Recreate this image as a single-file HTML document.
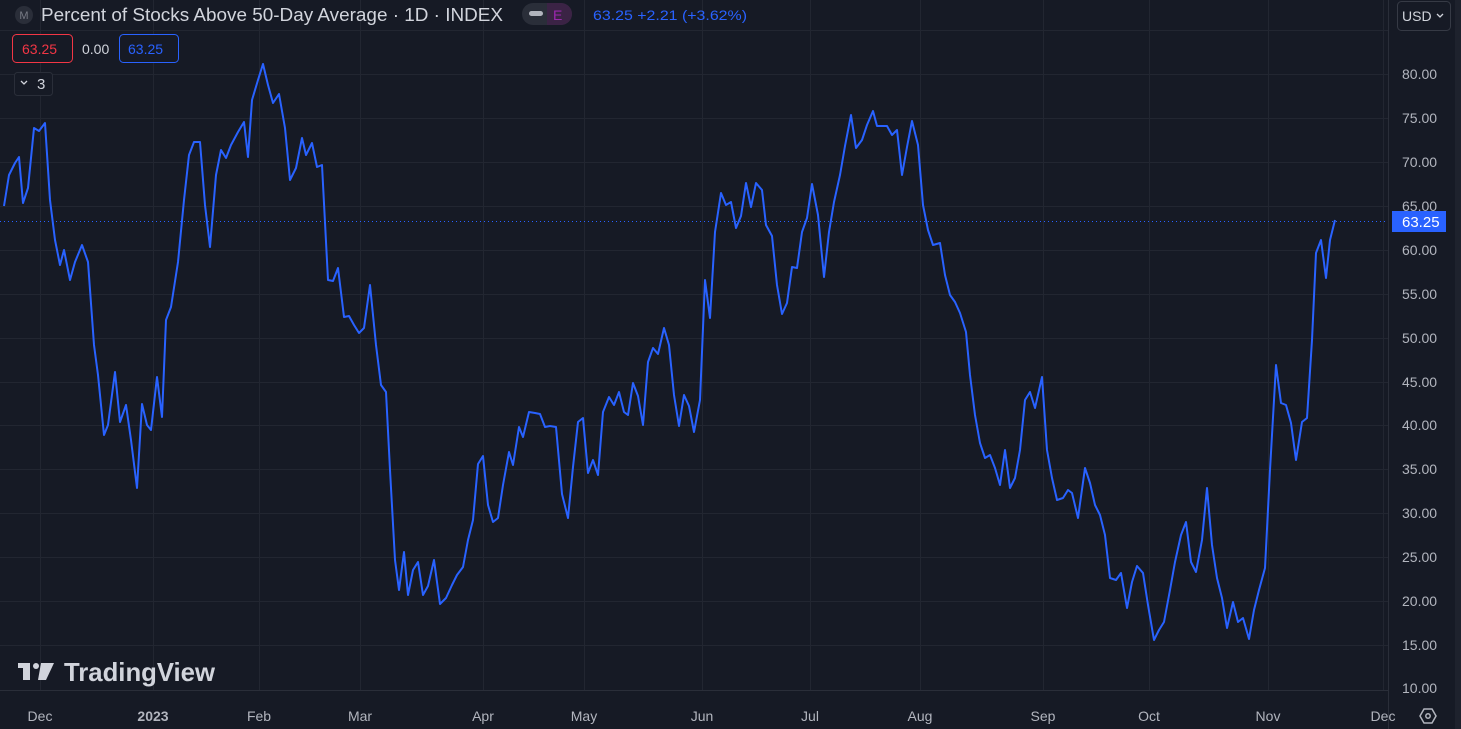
<!DOCTYPE html>
<html><head><meta charset="utf-8"><style>
html,body{margin:0;padding:0;background:#161a25;width:1461px;height:729px;overflow:hidden;font-family:"Liberation Sans",sans-serif}
</style></head><body>
<svg width="1461" height="729" style="position:absolute;left:0;top:0">
<rect width="1461" height="729" fill="#161a25"/>
<g stroke="#222631" stroke-width="1">
<line x1="0" y1="74.5" x2="1388" y2="74.5"/><line x1="0" y1="118.5" x2="1388" y2="118.5"/><line x1="0" y1="162.5" x2="1388" y2="162.5"/><line x1="0" y1="206.5" x2="1388" y2="206.5"/><line x1="0" y1="250.5" x2="1388" y2="250.5"/><line x1="0" y1="294.5" x2="1388" y2="294.5"/><line x1="0" y1="338.5" x2="1388" y2="338.5"/><line x1="0" y1="382.5" x2="1388" y2="382.5"/><line x1="0" y1="425.5" x2="1388" y2="425.5"/><line x1="0" y1="469.5" x2="1388" y2="469.5"/><line x1="0" y1="513.5" x2="1388" y2="513.5"/><line x1="0" y1="557.5" x2="1388" y2="557.5"/><line x1="0" y1="601.5" x2="1388" y2="601.5"/><line x1="0" y1="645.5" x2="1388" y2="645.5"/><line x1="0" y1="30.5" x2="1388" y2="30.5"/>
<line x1="40.5" y1="0" x2="40.5" y2="690"/><line x1="153.5" y1="0" x2="153.5" y2="690"/><line x1="259.5" y1="0" x2="259.5" y2="690"/><line x1="360.5" y1="0" x2="360.5" y2="690"/><line x1="483.5" y1="0" x2="483.5" y2="690"/><line x1="584.5" y1="0" x2="584.5" y2="690"/><line x1="702.5" y1="0" x2="702.5" y2="690"/><line x1="810.5" y1="0" x2="810.5" y2="690"/><line x1="920.5" y1="0" x2="920.5" y2="690"/><line x1="1043.5" y1="0" x2="1043.5" y2="690"/><line x1="1149.5" y1="0" x2="1149.5" y2="690"/><line x1="1268.5" y1="0" x2="1268.5" y2="690"/><line x1="1383.5" y1="0" x2="1383.5" y2="690"/>
</g>
<line x1="0" y1="690.5" x2="1388" y2="690.5" stroke="#2a2e39"/>
<line x1="1388.5" y1="0" x2="1388.5" y2="729" stroke="#2a2e39"/>
<rect x="1455" y="0" width="6" height="729" fill="#1e222d"/>
<line x1="0" y1="221.5" x2="1388" y2="221.5" stroke="#2962ff" stroke-dasharray="1,3"/>
<polyline fill="none" stroke="#2962ff" stroke-width="2" stroke-linejoin="round" points="4,206 9,175 15,163 19,157 23,203 28,188 34,128 39,131 45,123 50,200 55,240 60,265 64,250 70,280 75,262 82,245 88,262 94,345 98,375 104,435 108,425 115,372 120,422 126,405 131,440 137,488 142,404 147,425 151,430 157,377 162,417 166,320 171,307 178,262 184,200 189,155 194,142 200,142 205,205 210,247 216,175 221,150 226,158 231,145 238,132 244,122 248,157 252,100 258,80 263,64 268,85 273,103 279,94 285,128 290,180 296,168 302,138 306,155 312,143 317,167 322,165 328,280 333,281 338,268 344,317 349,316 354,325 359,333 364,328 370,285 376,345 381,385 386,392 390,470 395,560 399,590 404,552 408,595 413,570 418,562 423,595 428,586 434,560 440,604 446,598 452,585 457,575 463,567 468,540 473,520 478,464 483,456 488,505 493,522 498,518 503,485 509,452 513,465 519,427 523,437 529,412 535,413 540,414 545,427 550,426 556,427 562,494 568,518 573,467 578,422 583,418 588,473 593,460 598,475 603,412 609,397 614,405 619,392 624,412 628,415 633,383 638,396 643,425 648,362 653,348 658,354 664,328 669,345 674,395 679,426 684,395 689,406 694,432 700,400 705,280 710,318 715,232 721,193 726,205 731,202 736,228 741,216 746,183 751,207 756,183 762,190 766,225 772,236 777,285 782,314 787,303 792,267 797,268 802,232 807,218 812,184 818,215 824,277 829,232 834,202 840,175 845,146 851,115 856,148 862,140 867,125 873,111 877,126 882,126 887,126 892,135 897,130 902,175 907,147 912,121 918,145 923,205 928,230 933,245 940,243 945,275 950,295 955,302 960,313 966,332 970,375 975,415 980,443 985,458 990,455 995,468 1000,485 1005,450 1010,488 1015,478 1020,450 1025,400 1030,392 1035,408 1042,377 1047,450 1052,478 1057,500 1063,498 1068,490 1072,493 1078,518 1085,468 1090,483 1095,505 1100,515 1105,535 1110,578 1116,580 1121,573 1127,608 1132,582 1137,566 1143,573 1148,605 1154,640 1159,630 1164,622 1170,590 1175,562 1181,535 1186,522 1191,562 1196,572 1202,540 1207,488 1212,545 1217,578 1222,598 1227,628 1233,602 1238,622 1243,618 1249,639 1254,610 1259,590 1265,568 1270,470 1276,365 1281,403 1286,405 1291,423 1296,460 1302,422 1307,418 1312,340 1316,253 1321,240 1326,278 1330,240 1335,220"/>
<g fill="#b2b5be" font-family="Liberation Sans,sans-serif" font-size="14">
<text x="1402" y="79">80.00</text><text x="1402" y="123">75.00</text><text x="1402" y="167">70.00</text><text x="1402" y="211">65.00</text><text x="1402" y="255">60.00</text><text x="1402" y="299">55.00</text><text x="1402" y="343">50.00</text><text x="1402" y="387">45.00</text><text x="1402" y="430">40.00</text><text x="1402" y="474">35.00</text><text x="1402" y="518">30.00</text><text x="1402" y="562">25.00</text><text x="1402" y="606">20.00</text><text x="1402" y="650">15.00</text><text x="1402" y="693">10.00</text>
</g>
<rect x="1392" y="211" width="54" height="21" fill="#2962ff"/>
<text x="1402" y="227" fill="#fff" font-size="15" font-family="Liberation Sans,sans-serif">63.25</text>
<g fill="#b2b5be" font-size="14" font-family="Liberation Sans,sans-serif" text-anchor="middle">
<text x="40" y="721">Dec</text><text x="153" y="721" font-weight="bold">2023</text><text x="259" y="721">Feb</text><text x="360" y="721">Mar</text><text x="483" y="721">Apr</text><text x="584" y="721">May</text><text x="702" y="721">Jun</text><text x="810" y="721">Jul</text><text x="920" y="721">Aug</text><text x="1043" y="721">Sep</text><text x="1149" y="721">Oct</text><text x="1268" y="721">Nov</text><text x="1383" y="721">Dec</text>
</g>
<polygon points="1420,716 1424,709 1432,709 1436,716 1432,723 1424,723" fill="none" stroke="#b2b5be" stroke-width="1.5"/>
<circle cx="1428" cy="716" r="2.2" fill="none" stroke="#b2b5be" stroke-width="1.5"/>
<rect x="1397.5" y="1.5" width="53" height="29" rx="4" fill="none" stroke="#363a45"/>
<text x="1402" y="21" fill="#d1d4dc" font-size="14" font-family="Liberation Sans,sans-serif">USD</text>
<polyline points="1437,14 1440,17 1443,14" fill="none" stroke="#d1d4dc" stroke-width="1.3"/>
<g fill="#d1d4dc">
<rect x="18" y="663" width="12" height="5"/><rect x="23" y="663" width="7" height="17"/>
<circle cx="36" cy="666" r="3"/>
<polygon points="41,663 54,663 46,680 38,680"/>
</g>
<text x="64" y="681" fill="#d1d4dc" font-size="26" font-weight="bold" font-family="Liberation Sans,sans-serif" textLength="151" lengthAdjust="spacingAndGlyphs">TradingView</text>
<circle cx="24" cy="15" r="9" fill="#2a2e39"/>
<text x="24" y="19" fill="#787b86" font-size="11" text-anchor="middle" font-family="Liberation Sans,sans-serif">M</text>
<text x="41" y="21" fill="#d1d4dc" font-size="18" font-family="Liberation Sans,sans-serif" textLength="462" lengthAdjust="spacingAndGlyphs">Percent of Stocks Above 50-Day Average · 1D · INDEX</text>
<rect x="522" y="3" width="50" height="22" rx="11" fill="#2a2e39"/>
<path d="M547,3 h14 a11,11 0 0 1 0,22 h-14 z" fill="#3b2345"/>
<rect x="529" y="11" width="14" height="5" rx="2.5" fill="#b2b5be"/>
<text x="553" y="20" fill="#9c27b0" font-size="14" font-family="Liberation Sans,sans-serif">E</text>
<text x="593" y="20" fill="#2962ff" font-size="14" font-family="Liberation Sans,sans-serif" textLength="154" lengthAdjust="spacingAndGlyphs">63.25  +2.21 (+3.62%)</text>
<rect x="12.5" y="34.5" width="60" height="28" rx="4" fill="#161a25" stroke="#f23645"/>
<text x="22" y="54" fill="#f23645" font-size="14" font-family="Liberation Sans,sans-serif">63.25</text>
<text x="82" y="54" fill="#d1d4dc" font-size="14" font-family="Liberation Sans,sans-serif">0.00</text>
<rect x="119.5" y="34.5" width="59" height="28" rx="4" fill="#161a25" stroke="#2962ff"/>
<text x="128" y="54" fill="#2962ff" font-size="14" font-family="Liberation Sans,sans-serif">63.25</text>
<rect x="14.5" y="72.5" width="38" height="23" rx="3" fill="#161a25" stroke="#2a2e39"/>
<polyline points="21,81 24,84 27,81" fill="none" stroke="#d1d4dc" stroke-width="1.3"/>
<text x="37" y="89" fill="#d1d4dc" font-size="15" font-family="Liberation Sans,sans-serif">3</text>
</svg>
</body></html>
